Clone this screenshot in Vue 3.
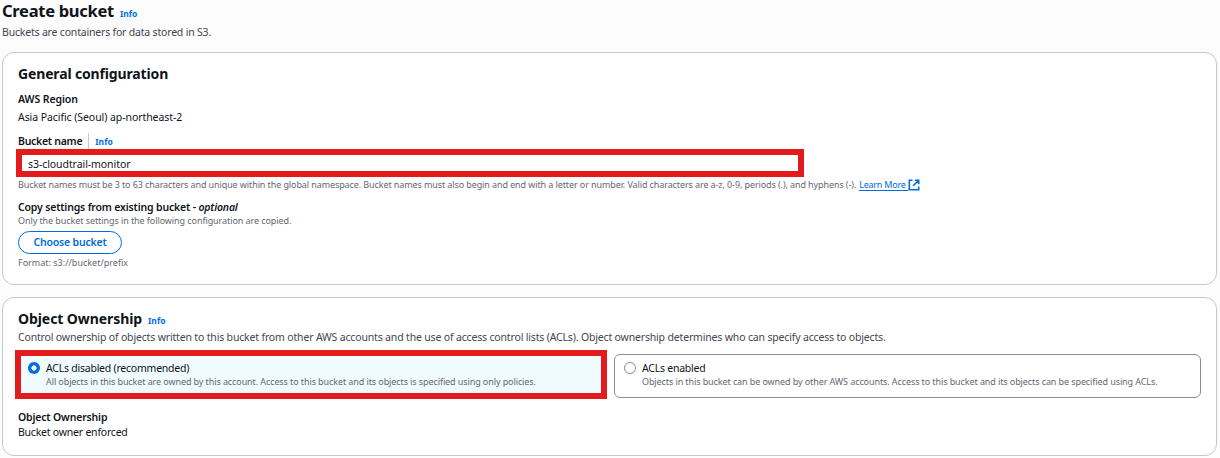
<script setup>
import { ref } from 'vue'

const bucketName = ref('s3-cloudtrail-monitor')
const acl = ref('disabled')
const tiles = [
  {
    id: 'disabled',
    label: 'ACLs disabled (recommended)',
    text: 'All objects in this bucket are owned by this account. Access to this bucket and its objects is specified using only policies.',
  },
  {
    id: 'enabled',
    label: 'ACLs enabled',
    text: 'Objects in this bucket can be owned by other AWS accounts. Access to this bucket and its objects can be specified using ACLs.',
  },
]
</script>

<template>
  <main class="page">
    <header class="head">
      <h1><span>Create bucket</span><a class="info">Info</a></h1>
      <p class="lead">Buckets are containers for data stored in S3.</p>
    </header>

    <section class="card general">
      <h2><span>General configuration</span></h2>
      <div class="label region">AWS Region</div>
      <div class="value address">Asia Pacific (Seoul) ap-northeast-2</div>
      <div class="label name-label">
        <span class="name">Bucket name</span><i class="divider"></i><a class="info">Info</a>
      </div>
      <div class="field">{{ bucketName }}</div>
      <div class="hint name-hint">
        <span>Bucket names must be 3 to 63 characters and unique within the global namespace. Bucket names must also begin and end with a letter or number. Valid characters are a-z, 0-9, periods (.), and hyphens (-).</span>
        <a class="more">Learn More</a>
        <svg class="ext" viewBox="0 0 12 12" fill="none" stroke="#006ce0" stroke-width="1.6">
          <path d="M4.4 1.3H1.3v9.4h9.4V7.6M6.8 1.3h3.9v3.9M10.5 1.5 5.2 6.8" />
        </svg>
      </div>
      <div class="label copy">Copy settings from existing bucket - <em>optional</em></div>
      <div class="hint only">Only the bucket settings in the following configuration are copied.</div>
      <button class="choose">Choose bucket</button>
      <div class="hint format">Format: s3://bucket/prefix</div>
    </section>

    <section class="card ownership">
      <h2><span class="owner-title">Object Ownership</span><a class="info">Info</a></h2>
      <p class="control">Control ownership of objects written to this bucket from other AWS accounts and the use of access control lists (ACLs). Object ownership determines who can specify access to objects.</p>
      <div class="tiles">
        <div
          v-for="t in tiles"
          :key="t.id"
          class="tile"
          :class="{ selected: acl === t.id }"
          @click="acl = t.id"
        >
          <i class="radio"></i>
          <div class="body">
            <div class="tile-label">{{ t.label }}</div>
            <div class="tile-text">{{ t.text }}</div>
          </div>
        </div>
      </div>
      <div class="label owner-label">Object Ownership</div>
      <div class="value owner-value">Bucket owner enforced</div>
    </section>
  </main>
</template>

<style>
body {
  background: #fcfcfd;
}
</style>

<style scoped>
* {
  box-sizing: border-box;
}
.page {
  width: 1220px;
  height: 458px;
  overflow: hidden;
  padding: 0 3px 0 2px;
  font-family: 'Noto Sans', 'Open Sans', sans-serif;
  font-size: 10.5px;
  color: #0f141a;
  white-space: nowrap;
}
h1,
h2,
p {
  margin: 0;
}
.head {
  height: 52px;
}
h1 {
  display: flex;
  align-items: baseline;
  height: 22px;
  line-height: 22px;
  font-size: 16.5px;
  font-weight: 700;
  letter-spacing: -0.28px;
}
.info {
  margin-left: 6px;
  font-size: 8.5px;
  font-weight: 700;
  letter-spacing: 0;
  color: #006ce0;
}
.lead {
  height: 20px;
  line-height: 20px;
  letter-spacing: -0.19px;
  color: #424650;
}
.card {
  border: 1px solid #c6c6cd;
  border-radius: 12px;
  background: #fff;
  padding: 0 15px;
}
.general {
  height: 233px;
}
.ownership {
  height: 159px;
  margin-top: 12px;
}
h2 {
  display: flex;
  align-items: baseline;
  height: 20px;
  margin-top: 11px;
  line-height: 20px;
  font-size: 14px;
  font-weight: 700;
  letter-spacing: -0.15px;
}
.owner-title {
  letter-spacing: -0.08px;
}
.label {
  height: 16px;
  line-height: 16px;
  font-weight: 600;
  letter-spacing: -0.17px;
}
.region {
  margin-top: 7px;
  letter-spacing: -0.1px;
}
.value {
  height: 16px;
  margin-top: 2px;
  line-height: 16px;
}
.address {
  letter-spacing: -0.07px;
}
.name-label {
  display: flex;
  margin-top: 8px;
}
.name {
  letter-spacing: -0.27px;
}
.name-label .info {
  line-height: 18px;
}
.divider {
  width: 1px;
  height: 16px;
  margin-left: 6px;
  background: #c6c6cd;
}
.field {
  position: relative;
  left: -2px;
  width: 788px;
  height: 28px;
  border: 6px solid #e31b1d;
  padding-left: 6px;
  line-height: 18px;
  letter-spacing: -0.07px;
}
.hint {
  height: 14px;
  line-height: 14px;
  font-size: 9px;
  letter-spacing: -0.1px;
  color: #656871;
}
.name-hint {
  display: flex;
  margin-top: 1px;
}
.more {
  height: 13px;
  margin-left: 3px;
  border-bottom: 1px solid #006ce0;
  padding-right: 2px;
  letter-spacing: -0.22px;
  color: #006ce0;
}
.ext {
  width: 12px;
  height: 12px;
  margin: 1px 0 0 0;
}
.copy {
  margin-top: 7px;
}
.only {
  margin-top: -1px;
  letter-spacing: -0.08px;
}
.choose {
  display: block;
  width: 104px;
  height: 23px;
  margin-top: 3px;
  padding: 0 0 1px;
  border: 1px solid #006ce0;
  border-radius: 12px;
  background: #fff;
  font: 600 10.5px/20px 'Noto Sans', sans-serif;
  letter-spacing: -0.2px;
  color: #006ce0;
}
.format {
  margin-top: 2px;
  letter-spacing: 0;
}
.control {
  height: 16px;
  line-height: 16px;
  letter-spacing: -0.167px;
  color: #424650;
}
.tiles {
  display: grid;
  grid-template-columns: 592px 587px;
  column-gap: 7px;
  align-items: end;
  height: 49px;
  margin: 5px 0 0 -3px;
}
.tile {
  display: flex;
  height: 44px;
  margin-bottom: 1px;
  border: 1px solid #8c8c94;
  border-radius: 6px;
  padding: 5px 0 0 9px;
}
.tile.selected {
  height: 49px;
  margin-bottom: 0;
  border: 6px solid #e31b1d;
  border-radius: 0;
  padding: 4px 0 0 7px;
  background: #f0fbff;
}
.radio {
  width: 12px;
  height: 12px;
  margin-top: 2px;
  border: 1px solid #8c8c94;
  border-radius: 50%;
  background: #fff;
}
.selected .radio {
  border: none;
  background: radial-gradient(circle, #fff 2.2px, #006ce0 3px);
}
.body {
  margin-left: 6px;
}
.tile-label {
  height: 15px;
  line-height: 16px;
  letter-spacing: -0.23px;
}
.tile-text {
  height: 13px;
  line-height: 13px;
  font-size: 9px;
  letter-spacing: -0.095px;
  color: #656871;
}
.owner-label {
  margin-top: 10px;
}
.owner-value {
  margin-top: -1px;
  letter-spacing: -0.22px;
}
</style>
